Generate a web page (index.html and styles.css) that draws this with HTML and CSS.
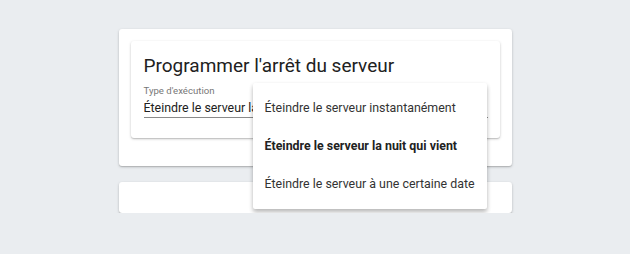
FILE: index.html
```html
<!DOCTYPE html>
<html lang="fr">
<head>
    <meta charset="UTF-8">
    <title>Programmer l'arrêt du serveur</title>
    <link rel="stylesheet" href="styles.css">
</head>
<body>
    <div class="page">
        <div class="card outer">
            <div class="card inner">
                <h1 class="title">Programmer l'arrêt du serveur</h1>
                <div class="field">
                    <label class="field-label">Type d'exécution</label>
                    <div class="field-value">Éteindre le serveur la nuit qui vient</div>
                </div>
                <!-- open select menu -->
                <div class="menu">
                    <div class="menu-item">Éteindre le serveur instantanément</div>
                    <div class="menu-item selected">Éteindre le serveur la nuit qui vient</div>
                    <div class="menu-item">Éteindre le serveur à une certaine date</div>
                </div>
            </div>
        </div>
        <div class="card footer"></div>
    </div>
</body>
</html>
```
FILE: styles.css
```css
body { margin: 0; background-color: #eaedf0; font-family: Roboto, "Liberation Sans", sans-serif; color: #212121; }
.page { width: 393px; margin: 29px auto 0; }
.card { background-color: #fff; border-radius: 3px; box-shadow: 0 1px 3px rgba(0, 0, 0, 0.2), 0 1px 1px rgba(0, 0, 0, 0.12); }
.outer { padding: 12px 12px 28px; }
.inner { position: relative; padding: 13px 12px 20px 13px; }
.title { margin: 0; font-size: 19px; font-weight: 400; line-height: 24px; }
.field { margin-top: 7px; border-bottom: 1px solid #8a8a8a; }
.field-label { display: block; font-size: 9.6px; line-height: 12px; color: #777; }
.field-value { font-size: 12.4px; line-height: 16px; padding-top: 3px; padding-bottom: 1px; white-space: nowrap; overflow: hidden; }
.footer { margin-top: 16px; height: 31px; }
.menu { position: absolute; left: 122px; top: 42px; width: 234px; padding: 6px 0; background-color: #fff; border-radius: 2px; box-shadow: 0 2px 4px rgba(0, 0, 0, 0.2), 0 4px 5px rgba(0, 0, 0, 0.12); }
.menu-item { height: 38px; line-height: 38px; padding: 0 12px; font-size: 12.4px; color: #333; white-space: nowrap; }
.menu-item.selected { font-weight: 700; color: #222; }
```
